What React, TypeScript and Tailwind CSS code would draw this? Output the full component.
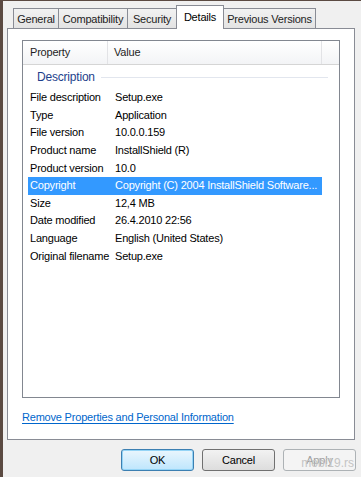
const tabs: [string, number][] = [
	["General", 46],
	["Compatibility", 70],
	["Security", 50],
	["Details", 48],
	["Previous Versions", 93],
];

const rows: [string, string][] = [
	["File description", "Setup.exe"],
	["Type", "Application"],
	["File version", "10.0.0.159"],
	["Product name", "InstallShield (R)"],
	["Product version", "10.0"],
	["Copyright", "Copyright (C) 2004 InstallShield Software..."],
	["Size", "12,4 MB"],
	["Date modified", "26.4.2010 22:56"],
	["Language", "English (United States)"],
	["Original filename", "Setup.exe"],
];

function Tab({ label, width, active }: { label: string; width: number; active: boolean }) {
	if (active)
		return (
			<div
				className="relative z-10 -mb-px -ml-px -mt-[3px] flex h-[24px] items-center justify-center border border-b-0 border-[#898c95] bg-white pb-[1px]"
				style={{ width }}
			>
				{label}
			</div>
		);
	return (
		<div
			className="-ml-px flex h-[20px] items-center justify-center border border-b-0 border-[#898c95] bg-gradient-to-b from-[#f2f2f2] to-[#e3e3e3] pt-px text-[#222] first:ml-0"
			style={{ width }}
		>
			{label}
		</div>
	);
}

function Button({ label, variant }: { label: string; variant?: "default" | "disabled" }) {
	const base = "flex h-[22px] w-[73px] items-center justify-center rounded-[3px] border";
	if (variant === "default")
		return (
			<div className={`${base} border-[#3c7fb1] bg-gradient-to-b from-[#eaf6fd] to-[#bee6fd] text-black shadow-[inset_0_0_0_1px_#94d4f6]`}>
				{label}
			</div>
		);
	if (variant === "disabled")
		return (
			<div className={`${base} border-[#adb2b5] bg-[#f4f4f4] text-[#a0a0a0]`}>{label}</div>
		);
	return (
		<div className={`${base} border-[#707070] bg-gradient-to-b from-[#f2f2f2] to-[#dddddd] text-black`}>
			{label}
		</div>
	);
}

export default function App() {
	return (
		<div
			className="flex h-[477px] w-[361px] flex-col border-l-[3px] border-t border-[#5b4a42] bg-[#f0f0f0] text-[11px] leading-none tracking-[-0.2px] text-black"
			style={{ fontFamily: '"Liberation Sans", Arial, sans-serif' }}
		>
			<div className="flex pl-[10px] pt-[7px]">
				{tabs.map(([t, w]) => (
					<Tab key={t} label={t} width={w} active={t === "Details"} />
				))}
			</div>

			<div className="ml-[4px] mr-[6px] flex h-[412px] flex-col border border-[#898c95] bg-white px-[14px] pt-[11px]">
				<div className="flex h-[358px] w-[318px] flex-col border border-[#828790] bg-white">
					<div className="flex h-[24px] border-b border-[#d5d5d5] bg-gradient-to-b from-white to-[#f3f4f6] text-[#1e1e1e]">
						<div className="flex w-[85px] items-center border-r border-[#e2e3e6] pl-[7px]">Property</div>
						<div className="flex w-[214px] items-center border-r border-[#e2e3e6] pl-[6px]">Value</div>
						<div className="flex-1" />
					</div>

					<div className="flex h-[24px] items-center pl-[14px] pr-[11px] text-[12px] text-[#1e3f8c]">
						<span>Description</span>
						<div className="ml-[6px] h-px flex-1 bg-[#e2e6ee]" />
					</div>

					<div className="flex flex-col px-[5px]">
						{rows.map(([k, v]) => {
							const sel = k === "Copyright";
							return (
								<div
									key={k}
									className={`flex h-[17.6px] w-[294px] items-center ${sel ? "bg-[#3399ff] text-white" : ""}`}
								>
									<div className="w-[85px] whitespace-nowrap pl-[2px]">{k}</div>
									<div className="whitespace-nowrap pl-[2px]">{v}</div>
								</div>
							);
						})}
					</div>
				</div>

				<div className="mt-[14px] text-[#0066cc] underline underline-offset-2">
					Remove Properties and Personal Information
				</div>
			</div>

			<div className="flex justify-end gap-[8px] pr-[5px] pt-[9px]">
				<Button label="OK" variant="default" />
				<Button label="Cancel" />
				<div className="relative">
					<Button label="Apply" variant="disabled" />
					<span className="absolute right-[2px] top-[8px] text-[12px] tracking-normal text-[#c4c4c4]">mobi19.rs</span>
				</div>
			</div>
		</div>
	);
}
